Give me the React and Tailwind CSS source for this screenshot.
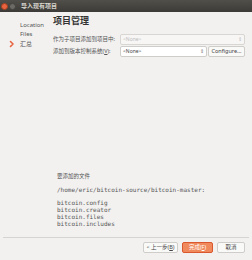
export default function App() {
  const sans = { fontFamily: '"Noto Sans", "Noto Sans CJK SC", sans-serif' };
  const mono = { fontFamily: '"DejaVu Sans Mono", monospace' };
  return (
    <div className="w-[252px] h-[260px] flex flex-col bg-[#f2f1f0] text-[#3c3c3c] overflow-hidden" style={sans}>
      <div className="h-[12px] flex items-center bg-gradient-to-b from-[#504f4a] to-[#3c3b37] pl-[1px]">
        <div className="w-[7px] h-[7px] rounded-full bg-[#e8633f] border border-[#a33f20]" />
        <div className="w-[7px] h-[7px] rounded-full bg-[#6b6a65] border border-[#44433f] ml-[1px]" />
        <span className="ml-[5px] text-[6px] leading-none text-[#d8d5cd] font-bold">导入现有项目</span>
      </div>
      <div className="flex-1 flex flex-col">
        <div className="flex flex-1">
          <div className="w-[53px] pt-[9px] text-[6px] leading-[8px] text-[#555]">
            <div className="pl-[20px]">Location</div>
            <div className="pl-[20px] mt-[1px]">Files</div>
            <div className="flex items-center mt-[2px] pl-[9px]">
              <svg width="11" height="8" viewBox="0 0 11 8" className="shrink-0">
                <path d="M1.5 1.5 L4 4 L1.5 6.5" fill="none" stroke="#e8633f" strokeWidth="1.6" strokeLinecap="round" strokeLinejoin="round" />
              </svg>
              <span>汇总</span>
            </div>
          </div>
          <div className="flex-1 flex flex-col pt-[3px] pr-[7px]">
            <div className="text-[9px] font-bold leading-[12px] text-[#333]">项目管理</div>
            <div className="flex items-center mt-[7px] h-[11px]">
              <span className="text-[5.5px] w-[67px] whitespace-nowrap text-[#555]">作为子项目添加到项目中:</span>
              <div className="flex-1 h-[11px] rounded-[2px] border border-[#d8d6d2] bg-[#f7f6f5] flex items-center justify-between px-[2px]">
                <span className="text-[5px] text-[#bbb]">&lt;None&gt;</span>
                <span className="text-[5px] text-[#bbb]">⇕</span>
              </div>
            </div>
            <div className="flex items-center mt-[1px] h-[11px]">
              <span className="text-[5.5px] w-[67px] whitespace-nowrap text-[#555]">添加到版本控制系统(<u>V</u>):</span>
              <div className="flex-1 h-[11px] rounded-[2px] border border-[#cfcdc9] bg-white flex items-center justify-between px-[2px]">
                <span className="text-[5px] text-[#444]">&lt;None&gt;</span>
                <span className="text-[5px] text-[#777]">⇕</span>
              </div>
              <div className="ml-[1px] w-[37px] h-[11px] rounded-[2px] border border-[#cfcdc9] bg-[#f9f9f8] flex items-center justify-center text-[5.5px] text-[#444]">Configure...</div>
            </div>
            <div className="flex-1" />
            <div className="pl-[4px] pb-[10px] text-[6px] leading-[7px] text-[#555]">
              <div className="text-[5.5px]">要添加的文件</div>
              <div className="mt-[6px]" style={mono}>/home/eric/bitcoin-source/bitcoin-master:</div>
              <div className="mt-[6px]" style={mono}>
                <div>bitcoin.config</div>
                <div>bitcoin.creator</div>
                <div>bitcoin.files</div>
                <div>bitcoin.includes</div>
              </div>
            </div>
          </div>
        </div>
        <div className="mx-[3px] h-[1px] bg-[#d6d4d0]" />
        <div className="h-[22px] flex items-start justify-end pt-[4px] pr-[7px] gap-[4px] text-[5.5px]">
          <div className="w-[35px] h-[11px] rounded-[2px] border border-[#cfcdc9] bg-[#f9f9f8] flex items-center justify-center text-[#444]">&lt; 上一步(<u>B</u>)</div>
          <div className="w-[31px] h-[11px] rounded-[2px] border border-[#d9582f] bg-[#f08a5d] flex items-center justify-center text-white">完成(<u>F</u>)</div>
          <div className="w-[28px] h-[11px] rounded-[2px] border border-[#cfcdc9] bg-[#f9f9f8] flex items-center justify-center text-[#444]">取消</div>
        </div>
      </div>
    </div>
  );
}
